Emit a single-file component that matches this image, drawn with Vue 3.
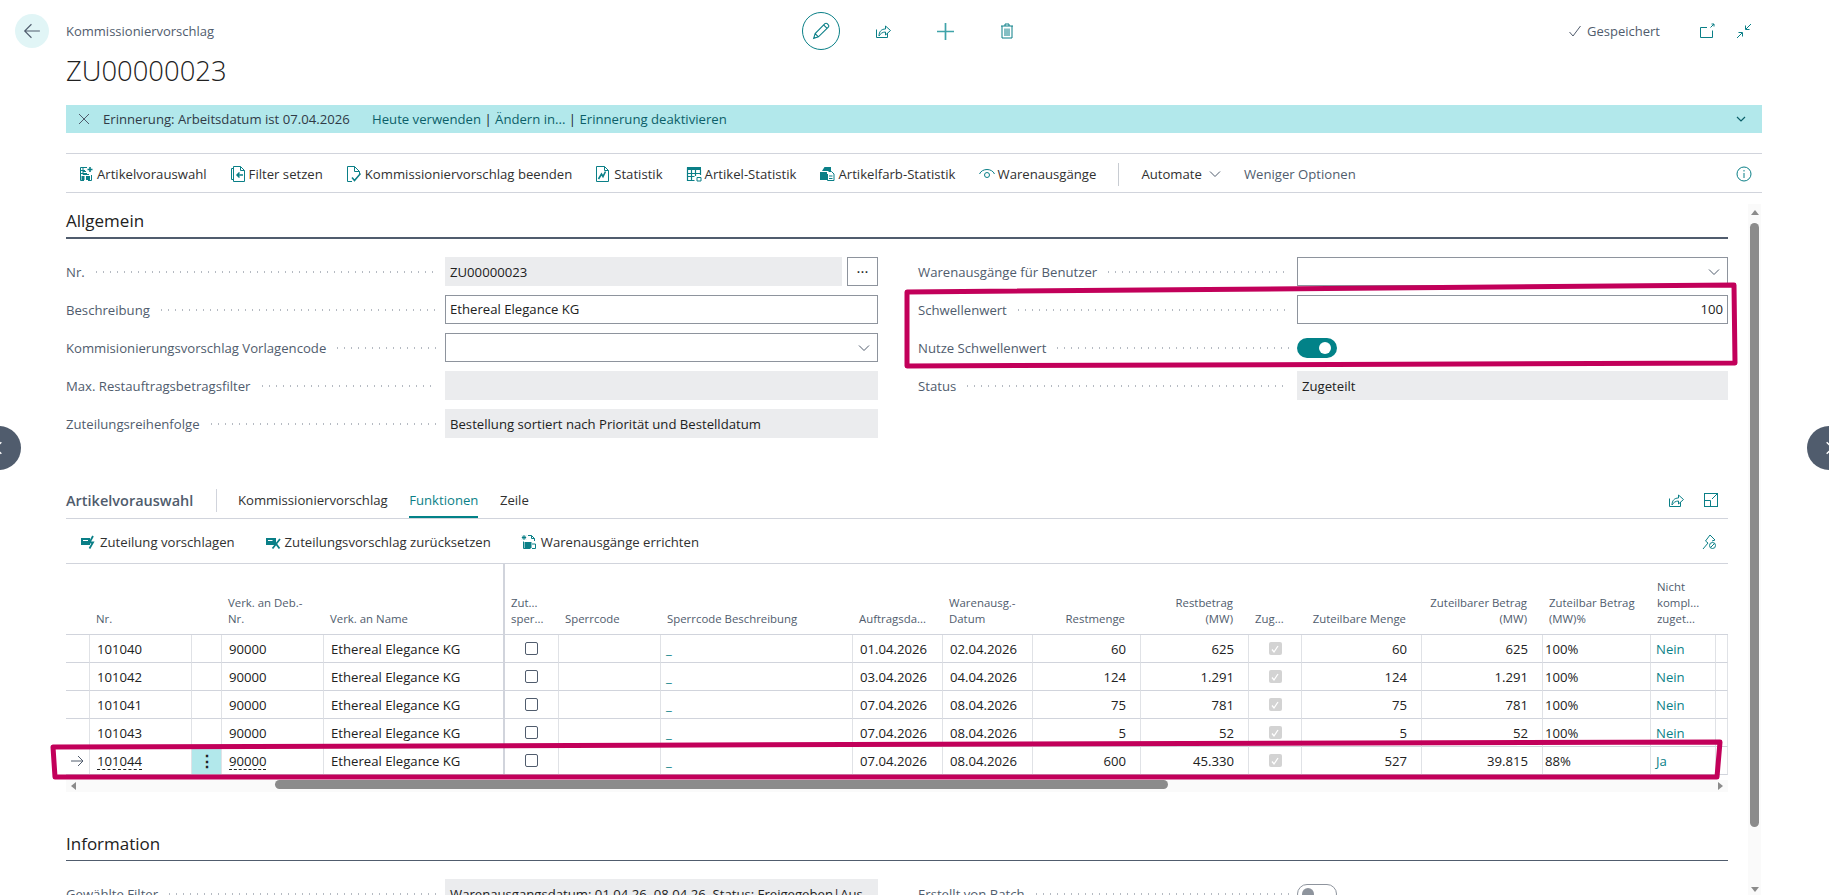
<script setup>
const icons = {
  pick: '<path d="M9 1.5H2.5v13H6M2.5 4.5H7M2.5 7.5H9M5 1.5v7M13.5 9v5.5H10"/><path d="M9.5 3.5h5M12 1v5" stroke-width="1.6"/><rect x="3.5" y="10" width="3" height="4" fill="#0a7f87" stroke="none"/><rect x="8" y="10" width="4" height="4" fill="#0a7f87" stroke="none"/><path d="M5 5.5h3M5 8.5h6"/>',
  filter: '<path d="M3.5 2.5h-2v11h2"/><path d="M3.5 15.5V.5h7l4 4v11z" /><path d="M10.5.5v4h4"/><path d="M13 9H7M9.5 6.5 7 9l2.5 2.5" stroke-width="1.5"/>',
  finish: '<path d="M6 15.5H1.5V.5h7l5 5v2.5M8.5.5v5h5"/><path d="M6 11.5l2.5 3 6-7" stroke-width="1.5"/>',
  stat: '<path d="M1.5.5h8l4 4v11h-12zM9.5.5v4h4"/><path d="M3.5 13 6.5 8l1.5 2.5 2.5-5" stroke-width="1.6"/>',
  itemstat: '<rect x="1" y="1" width="14" height="3" fill="#0a7f87" stroke="none"/><path d="M1.5 1.5v13h7M5.5 4v10.5M9.5 4v6M14.5 4v5M1.5 7.5h13M1.5 10.5h7" stroke-width="1.2"/><path d="M11 11.5h4V15h-4z"/>',
  colorstat: '<path d="M3 5 5.5 1h6.5v4z" fill="#0a7f87" stroke="none"/><rect x="1" y="6" width="7" height="8" fill="#0a7f87" stroke="none"/><path d="M9.5 5.5h3l2.5 2.5v6.5H8.5V8"/><path d="M10 10h3.5M10 12.5h3.5"/>',
  eye: '<path d="M.5 8C3 2 13 2 15.5 8"/><circle cx="8" cy="9" r="2.5"/>',
  propose: '<rect x="1" y="4" width="9" height="7" fill="#0a7f87" stroke="none"/><path d="M3 6.5h5" stroke="#fff"/><path d="M13 2 9.5 8.5H13L9.5 14.5" stroke-width="1.8"/>',
  reset: '<rect x="1" y="4" width="10" height="7" fill="#0a7f87" stroke="none"/><path d="M3 6.5h6" stroke="#fff"/><path d="M7.5 5l7 9.5M15 5l-7.5 9.5" stroke-width="1.8"/>',
  ship: '<path d="M3 1v5M.8 3.5h4.4M1.3 1.8l3.4 3.4M4.7 1.8 1.3 5.2"/><path d="M7 1.5h3.5l3 3V7M10.5 1.5v3h3"/><path d="M2.5 7.5V14.5h7"/><rect x="3.5" y="8" width="7" height="6" fill="#0a7f87" stroke="none"/><path d="M11 10h3.5v4.5H11"/>',
  share: '<path d="M1.5 6.5v8h11V10"/><path d="M4 13c0-4.5 2.5-7 6.5-7V3l5 4.5-5 4.5V9C7.5 9 5.5 10.5 4 13z"/>',
  tableOpen: '<rect x="1.5" y="1.5" width="13" height="13"/><path d="M1.5 8.5h6v6M9 7l5.5-5.5M10.5 1.5h4v4"/>',
  pin: '<path d="M9 1 4.5 7 7 9l-5 6M9 1l5 5-3 1"/><circle cx="11.5" cy="11.5" r="3"/><path d="M9.5 13.5l4-4"/>',
  pop: '<path d="M13.5 7.5v7h-12v-10H8"/><path d="M11.5 4.5 15 1M12.5 1H15v2.5"/>',
  shrink: '<path d="M1 15l5-5M2.5 9.5H6.5V13.5"/><path d="M15 1l-5 5M9.5 2.5V6.5H13.5"/>'
}

const actions = [
  { icon: 'pick', text: 'Artikelvorauswahl' },
  { icon: 'filter', text: 'Filter setzen' },
  { icon: 'finish', text: 'Kommissioniervorschlag beenden' },
  { icon: 'stat', text: 'Statistik' },
  { icon: 'itemstat', text: 'Artikel-Statistik' },
  { icon: 'colorstat', text: 'Artikelfarb-Statistik' },
  { icon: 'eye', text: 'Warenausgänge' }
]

const subActions = [
  { icon: 'propose', text: 'Zuteilung vorschlagen' },
  { icon: 'reset', text: 'Zuteilungsvorschlag zurücksetzen' },
  { icon: 'ship', text: 'Warenausgänge errichten' }
]

const leftFields = [
  { label: 'Nr.', value: 'ZU00000023', kind: 'ro', more: true },
  { label: 'Beschreibung', value: 'Ethereal Elegance KG', kind: 'edit' },
  { label: 'Kommisionierungsvorschlag Vorlagencode', value: '', kind: 'select' },
  { label: 'Max. Restauftragsbetragsfilter', value: '', kind: 'ro' },
  { label: 'Zuteilungsreihenfolge', value: 'Bestellung sortiert nach Priorität und Bestelldatum', kind: 'ro' }
]

const rightFields = [
  { label: 'Warenausgänge für Benutzer', value: '', kind: 'select' },
  { label: 'Schwellenwert', value: '100', kind: 'num' },
  { label: 'Nutze Schwellenwert', kind: 'toggle' },
  { label: 'Status', value: 'Zugeteilt', kind: 'ro' }
]

const columns = [
  { w: 24, h: '' },
  { w: 102, h: 'Nr.' },
  { w: 30, h: '' },
  { w: 102, h: 'Verk. an Deb.-\nNr.' },
  { w: 181, h: 'Verk. an Name' },
  { w: 54, h: 'Zut...\nsper...' },
  { w: 102, h: 'Sperrcode' },
  { w: 192, h: 'Sperrcode Beschreibung' },
  { w: 90, h: 'Auftragsda...' },
  { w: 90, h: 'Warenausg.-\nDatum' },
  { w: 108, h: 'Restmenge', right: true },
  { w: 108, h: 'Restbetrag\n(MW)', right: true },
  { w: 53, h: 'Zug...' },
  { w: 120, h: 'Zuteilbare Menge', right: true },
  { w: 121, h: 'Zuteilbarer Betrag\n(MW)', right: true },
  { w: 108, h: 'Zuteilbar Betrag\n(MW)%' },
  { w: 65, h: 'Nicht\nkompl...\nzuget...' },
  { w: 12, h: '' }
]

const rows = [
  { nr: '101040', d1: '01.04.2026', d2: '02.04.2026', qty: '60', amt: '625', aq: '60', aa: '625', pct: '100%', full: 'Nein' },
  { nr: '101042', d1: '03.04.2026', d2: '04.04.2026', qty: '124', amt: '1.291', aq: '124', aa: '1.291', pct: '100%', full: 'Nein' },
  { nr: '101041', d1: '07.04.2026', d2: '08.04.2026', qty: '75', amt: '781', aq: '75', aa: '781', pct: '100%', full: 'Nein' },
  { nr: '101043', d1: '07.04.2026', d2: '08.04.2026', qty: '5', amt: '52', aq: '5', aa: '52', pct: '100%', full: 'Nein' },
  { nr: '101044', d1: '07.04.2026', d2: '08.04.2026', qty: '600', amt: '45.330', aq: '527', aa: '39.815', pct: '88%', full: 'Ja', current: true }
]
</script>

<template>
  <div class="page">
    <header class="head">
      <div class="head-row">
        <button class="back">
          <svg class="line-ic" viewBox="0 0 16 16" width="18" height="18"><path d="M15 8H1.5M7.5 2 1.5 8l6 6" /></svg>
        </button>
        <span class="crumb">Kommissioniervorschlag</span>
        <div class="head-tools">
          <span class="tool edit">
            <svg class="ic" viewBox="0 0 16 16" width="18" height="18"><path d="M1.5 14.5 2.8 10.3 11.5 1.5a1.4 1.4 0 0 1 2 0l1 1a1.4 1.4 0 0 1 0 2L5.7 13.2zM2.8 10.3l2.9 2.9M10.5 2.8l2.7 2.7" /></svg>
          </span>
          <span class="tool"><svg class="ic" viewBox="0 0 16 16" width="16" height="16" v-html="icons.share"></svg></span>
          <span class="tool">
            <svg class="ic plus" viewBox="0 0 16 16" width="16" height="16"><path d="M8 0v16M0 8h16" /></svg>
          </span>
          <span class="tool">
            <svg class="ic" viewBox="0 0 16 16" width="16" height="16"><path d="M2 3h12M6 3V1h4v2M3 3v12h10V3M6 5.5V13M8 5.5V13M10 5.5V13" /></svg>
          </span>
        </div>
        <div class="head-status">
          <svg class="line-ic" viewBox="0 0 12 12" width="12" height="12"><path d="M.5 7 4 11 11.5 1" /></svg>
          <span class="saved">Gespeichert</span>
          <svg class="ic pop" viewBox="0 0 16 16" width="16" height="16" v-html="icons.pop"></svg>
          <svg class="ic" viewBox="0 0 16 16" width="16" height="16" v-html="icons.shrink"></svg>
        </div>
      </div>
      <h1 class="title">ZU00000023</h1>
    </header>

    <div class="notice">
      <svg class="line-ic x" viewBox="0 0 12 12" width="12" height="12"><path d="M1 1l10 10M11 1 1 11" /></svg>
      <span class="notice-text">Erinnerung: Arbeitsdatum ist 07.04.2026</span>
      <span class="notice-links">Heute verwenden <i>|</i> Ändern in... <i>|</i> Erinnerung deaktivieren</span>
      <svg class="notice-chev" viewBox="0 0 12 12" width="12" height="12"><path d="M2 4l4 4 4-4" /></svg>
    </div>

    <nav class="actions">
      <span v-for="a in actions" :key="a.text" class="act">
        <svg class="ic" viewBox="0 0 16 16" width="16" height="16" v-html="icons[a.icon]"></svg>
        {{ a.text }}
      </span>
      <span class="act-sep"></span>
      <span class="act">Automate
        <svg class="line-ic chev" viewBox="0 0 12 12" width="12" height="12"><path d="M1 3.5l5 5 5-5" /></svg>
      </span>
      <span class="act muted">Weniger Optionen</span>
      <svg class="ic info" viewBox="0 0 16 16" width="16" height="16"><circle cx="8" cy="8" r="7" /><path d="M8 7v5M8 4v1.5" /></svg>
    </nav>

    <div class="scroller">
      <main class="content">
        <h2 class="section first">Allgemein</h2>
        <div class="form">
          <div class="form-col left">
            <div v-for="f in leftFields" :key="f.label" class="field">
              <label class="lbl"><span>{{ f.label }}</span><i class="dots"></i></label>
              <div class="ctl-wrap">
                <div class="ctl" :class="f.kind">{{ f.value }}
                  <svg v-if="f.kind === 'select'" class="line-ic sel" viewBox="0 0 12 12" width="12" height="12"><path d="M1 3.5l5 5 5-5" /></svg>
                </div>
                <button v-if="f.more" class="more">···</button>
              </div>
            </div>
          </div>
          <div class="form-col right">
            <div v-for="f in rightFields" :key="f.label" class="field">
              <label class="lbl"><span>{{ f.label }}</span><i class="dots"></i></label>
              <div class="ctl-wrap">
                <div v-if="f.kind === 'toggle'" class="toggle on"><b></b></div>
                <div v-else class="ctl" :class="f.kind">{{ f.value }}
                  <svg v-if="f.kind === 'select'" class="line-ic sel" viewBox="0 0 12 12" width="12" height="12"><path d="M1 3.5l5 5 5-5" /></svg>
                </div>
              </div>
            </div>
          </div>
        </div>

        <section class="sub">
          <div class="tabs">
            <span class="sub-title">Artikelvorauswahl</span>
            <span class="tab">Kommissioniervorschlag</span>
            <span class="tab active">Funktionen</span>
            <span class="tab">Zeile</span>
            <span class="tabs-tools">
              <svg class="ic" viewBox="0 0 16 16" width="16" height="16" v-html="icons.share"></svg>
              <svg class="ic" viewBox="0 0 16 16" width="16" height="16" v-html="icons.tableOpen"></svg>
            </span>
          </div>
          <div class="sub-actions">
            <span v-for="a in subActions" :key="a.text" class="act">
              <svg class="ic" viewBox="0 0 16 16" width="16" height="16" v-html="icons[a.icon]"></svg>
              {{ a.text }}
            </span>
            <svg class="ic pin" viewBox="0 0 16 16" width="16" height="16" v-html="icons.pin"></svg>
          </div>
          <table class="grid">
            <colgroup>
              <col v-for="(c, i) in columns" :key="i" :style="{ width: c.w + 'px' }" />
            </colgroup>
            <thead>
              <tr>
                <th v-for="(c, i) in columns" :key="i" :class="{ right: c.right }">{{ c.h }}</th>
              </tr>
            </thead>
            <tbody>
              <tr v-for="r in rows" :key="r.nr">
                <td class="mark">
                  <svg v-if="r.current" class="line-ic" viewBox="0 0 14 14" width="14" height="14"><path d="M1 7h12M8 2l5 5-5 5" /></svg>
                </td>
                <td><span :class="{ dashed: r.current }">{{ r.nr }}</span></td>
                <td class="menu" :class="{ on: r.current }">{{ r.current ? '⋮' : '' }}</td>
                <td><span :class="{ dashed: r.current }">90000</span></td>
                <td>Ethereal Elegance KG</td>
                <td class="center"><span class="check"></span></td>
                <td></td>
                <td class="link">_</td>
                <td>{{ r.d1 }}</td>
                <td>{{ r.d2 }}</td>
                <td class="right">{{ r.qty }}</td>
                <td class="right">{{ r.amt }}</td>
                <td class="center">
                  <span class="check done">
                    <svg viewBox="0 0 12 12" width="12" height="12"><path d="M3 6.5 5 9l4-6" /></svg>
                  </span>
                </td>
                <td class="right">{{ r.aq }}</td>
                <td class="right">{{ r.aa }}</td>
                <td class="tight">{{ r.pct }}</td>
                <td class="link">{{ r.full }}</td>
                <td></td>
              </tr>
            </tbody>
          </table>
          <div class="hbar">
            <i class="arrow-l"></i>
            <span class="hthumb"></span>
            <i class="arrow-r"></i>
          </div>
        </section>

        <h2 class="section second">Information</h2>
        <div class="form">
          <div class="form-col left">
            <div class="field">
              <label class="lbl"><span>Gewählte Filter</span><i class="dots"></i></label>
              <div class="ctl-wrap"><div class="ctl ro">Warenausgangsdatum: 01.04.26..08.04.26, Status: Freigegeben|Aus</div></div>
            </div>
          </div>
          <div class="form-col right">
            <div class="field">
              <label class="lbl"><span>Erstellt von Batch</span><i class="dots"></i></label>
              <div class="ctl-wrap"><div class="toggle off"><b></b></div></div>
            </div>
          </div>
        </div>
      </main>
      <aside class="vbar">
        <i class="arrow-u"></i>
        <span class="vthumb"></span>
        <i class="arrow-d"></i>
      </aside>
    </div>

    <span class="side prev">
      <svg viewBox="0 0 12 12" width="14" height="14"><path d="M8 1 3 6l5 5" /></svg>
    </span>
    <span class="side next">
      <svg viewBox="0 0 12 12" width="14" height="14"><path d="M4 1l5 5-5 5" /></svg>
    </span>

    <svg class="marks" viewBox="0 0 1829 895" width="1829" height="895">
      <path d="M907 292 1734 285 1735 363 907 366Z" />
      <path d="M53 747 1720 742 1717 777 55 777Z" />
    </svg>
  </div>
</template>

<style scoped>
.page {
  position: relative;
  width: 1829px;
  height: 895px;
  overflow: hidden;
  background: #fff;
  color: #212121;
  font-family: "Open Sans", "Noto Sans", sans-serif;
  font-size: 13.15px;
}
.ic {
  flex: none;
  fill: none;
  stroke: #0a7f87;
  stroke-width: 1;
}
.line-ic {
  flex: none;
  fill: none;
  stroke: #505c6d;
  stroke-width: 1;
}
.head {
  height: 105px;
  padding-top: 12px;
  box-sizing: border-box;
}
.head-row {
  display: flex;
  align-items: center;
  height: 38px;
}
.back {
  width: 34px;
  height: 34px;
  margin-left: 15px;
  padding: 0;
  border: 0;
  border-radius: 50%;
  background: #e1f5f6;
  display: flex;
  align-items: center;
  justify-content: center;
}
.crumb {
  margin-left: 17px;
  width: 736px;
  color: #505c6d;
  font-size: 13px;
}
.head-tools {
  display: flex;
  gap: 24px;
}
.tool {
  width: 38px;
  height: 38px;
  display: flex;
  align-items: center;
  justify-content: center;
  box-sizing: border-box;
}
.tool.edit {
  border: 1px solid #0a7f87;
  border-radius: 50%;
}
.plus {
  stroke: #3fa3a9;
  stroke-width: 1.6;
  width: 17px;
  height: 17px;
}
.head-status {
  margin-left: auto;
  margin-right: 77px;
  display: flex;
  align-items: center;
}
.saved {
  margin-left: 6px;
  margin-right: 39px;
  font-size: 13px;
  color: #505c6d;
}
.pop {
  margin-right: 21px;
}
.title {
  margin: 3px 0 0 66px;
  font-size: 27.4px;
  font-weight: 300;
  line-height: 36px;
  color: #212121;
}
.notice {
  display: flex;
  align-items: center;
  height: 28px;
  margin: 0 67px 0 66px;
  padding: 0 12px;
  background: #b2e8eb;
}
.x {
  margin-right: 13px;
}
.notice-text {
  width: 269px;
  color: #303a46;
}
.notice-links {
  color: #0b5f69;
}
.notice-links i {
  font-style: normal;
  color: #212121;
}
.notice-chev {
  margin-left: auto;
  margin-right: 3px;
  fill: none;
  stroke: #0b5f69;
  stroke-width: 1.2;
}
.actions {
  display: flex;
  align-items: center;
  gap: 23px;
  margin: 20px 67px 0 66px;
  padding: 2px 12px 0;
  box-sizing: border-box;
  height: 40px;
  border-top: 1px solid #d1d4dc;
  border-bottom: 1px solid #d1d4dc;
}
.act {
  display: inline-flex;
  align-items: center;
  gap: 3px;
  white-space: nowrap;
  color: #303030;
}
.act.muted {
  color: #505c6d;
}
.act-sep {
  width: 1px;
  height: 23px;
  background: #c8ccd2;
  margin: 0 -1px;
}
.chev {
  margin-left: 4px;
}
.info {
  margin-left: auto;
  margin-right: -2px;
}
.scroller {
  display: flex;
  height: 702px;
  overflow: hidden;
}
.content {
  width: 1662px;
  margin-left: 66px;
  flex: none;
}
.section {
  margin: 0;
  font-size: 17px;
  font-weight: 500;
  line-height: 26px;
  color: #212121;
  border-bottom: 2px solid #505c6d;
}
.section.first {
  margin-top: 15px;
  padding-bottom: 3px;
}
.section.second {
  margin-top: 39px;
  padding-bottom: 3px;
  border-bottom-width: 1px;
}
.form {
  display: grid;
  grid-template-columns: 812px 810px;
  column-gap: 40px;
  margin-top: 18px;
}
.form-col {
  display: flex;
  flex-direction: column;
  gap: 9px;
}
.field {
  display: flex;
  align-items: center;
  height: 29px;
}
.lbl {
  flex: none;
  display: flex;
  align-items: center;
  gap: 8px;
  width: 379px;
  padding-right: 8px;
  box-sizing: border-box;
  color: #505c6d;
  white-space: nowrap;
}
.dots {
  flex: 1;
  height: 4px;
  background: radial-gradient(circle, #b5bac2 0.8px, transparent 1.1px) 0 0 / 7px 4px repeat-x;
}
.ctl-wrap {
  flex: 1;
  display: flex;
  gap: 5px;
  height: 100%;
  align-items: center;
}
.ctl {
  position: relative;
  flex: 1;
  height: 29px;
  box-sizing: border-box;
  padding: 0 5px;
  line-height: 30px;
  white-space: nowrap;
  overflow: hidden;
}
.ctl.ro {
  background: #ebecee;
}
.ctl.edit,
.ctl.select,
.ctl.num {
  border: 1px solid #8e949d;
  line-height: 27px;
  padding: 0 4px;
}
.ctl.num {
  text-align: right;
}
.sel {
  position: absolute;
  right: 7px;
  top: 8px;
}
.more {
  flex: none;
  width: 31px;
  height: 29px;
  padding: 0 0 2px;
  border: 1px solid #8e949d;
  background: #fff;
  font-family: inherit;
  font-size: 15px;
  font-weight: 400;
  color: #212121;
}
.toggle {
  position: relative;
  width: 40px;
  height: 20px;
  box-sizing: border-box;
  border-radius: 10px;
}
.toggle b {
  position: absolute;
  top: 4px;
  width: 12px;
  height: 12px;
  border-radius: 50%;
}
.toggle.on {
  background: #028288;
}
.toggle.on b {
  right: 6px;
  background: #fff;
}
.toggle.off {
  border: 1px solid #8e949d;
}
.toggle.off b {
  left: 4px;
  top: 3px;
  background: #8e949d;
}
.sub {
  margin-top: 50px;
}
.tabs {
  display: flex;
  align-items: center;
  height: 30px;
  border-bottom: 1px solid #d1d4dc;
  box-sizing: content-box;
}
.sub-title {
  font-size: 14.5px;
  font-weight: 600;
  color: #505c6d;
  width: 150px;
  height: 23px;
  line-height: 23px;
  border-right: 1px solid #d1d4dc;
  margin-right: 21px;
  margin-top: -6px;
}
.tab {
  height: 30px;
  line-height: 24px;
  margin-right: 21.5px;
  box-sizing: border-box;
  color: #303030;
}
.tab.active {
  color: #0a7f87;
  border-bottom: 2px solid #028288;
}
.tabs-tools {
  margin-left: auto;
  margin-right: 9px;
  margin-top: -6px;
  display: flex;
  gap: 19px;
}
.sub-actions {
  display: flex;
  align-items: center;
  gap: 30px;
  height: 44px;
  padding: 1px 14px 0;
  box-sizing: content-box;
  height: 43px;
  border-bottom: 1px solid #d1d4dc;
}
.sub-actions .act {
  gap: 4px;
}
.pin {
  margin-left: auto;
  margin-right: -3px;
}
.grid {
  table-layout: fixed;
  width: 1662px;
  border-collapse: separate;
  border-spacing: 0;
}
.grid th {
  height: 71px;
  box-sizing: border-box;
  padding: 0 6px 7px;
  vertical-align: bottom;
  text-align: left;
  font-size: 11.4px;
  font-weight: 400;
  line-height: 16px;
  color: #505c6d;
  white-space: pre-line;
  border-bottom: 1px solid #d1d4dc;
  overflow: hidden;
}
.grid th.right {
  text-align: right;
  padding-right: 16px;
}
.grid th:nth-child(5),
.grid td:nth-child(5) {
  border-right: 2px solid #d1d4dc;
}
.grid td {
  height: 28px;
  box-sizing: border-box;
  padding: 0 7px;
  white-space: nowrap;
  overflow: hidden;
  border-bottom: 1px solid #d1d4dc;
  border-right: 1px solid #e0e2e6;
}
.grid td.right {
  text-align: right;
  padding-right: 14px;
}
.grid td.center {
  text-align: center;
  padding: 0;
}
.grid td.tight {
  padding-left: 2px;
}
.grid td.link {
  padding-left: 5px;
  color: #0a7f87;
}
.grid td.mark {
  padding: 0 0 0 4px;
}
.mark svg {
  display: block;
}
.grid td.menu {
  padding: 0;
  text-align: center;
  font-size: 16px;
  font-weight: 700;
}
.menu.on {
  background: #b2e8eb;
}
.dashed {
  text-decoration: underline dashed 1px #212121;
  text-underline-offset: 3px;
}
.check {
  display: inline-block;
  width: 13px;
  height: 13px;
  margin-top: -2px;
  box-sizing: border-box;
  border: 1px solid #505c6d;
  border-radius: 2px;
  vertical-align: middle;
}
.check.done {
  border: 0;
  background: #d3d3d3;
}
.check.done svg {
  display: block;
  fill: none;
  stroke: #fff;
  stroke-width: 1.3;
  margin: 0.5px;
}
.hbar {
  display: flex;
  align-items: center;
  height: 12px;
  margin-top: 5px;
  background: #fafafa;
  padding: 0 5px;
}
.arrow-l,
.arrow-r {
  width: 0;
  height: 0;
  border-top: 4px solid transparent;
  border-bottom: 4px solid transparent;
}
.arrow-l {
  border-right: 5px solid #8b8b8b;
}
.arrow-r {
  border-left: 5px solid #8b8b8b;
  margin-left: auto;
}
.hthumb {
  width: 893px;
  height: 9px;
  margin-left: 199px;
  border-radius: 5px;
  background: #8b8b8b;
  margin-top: -3px;
}
.vbar {
  flex: none;
  display: flex;
  flex-direction: column;
  align-items: center;
  width: 13px;
  margin-left: 20px;
  margin-top: 11px;
  background: #fafafa;
}
.vthumb {
  width: 9px;
  height: 604px;
  margin-top: 8px;
  border-radius: 5px;
  background: #8b8b8b;
}
.arrow-u,
.arrow-d {
  width: 0;
  height: 0;
  border-left: 4px solid transparent;
  border-right: 4px solid transparent;
}
.arrow-u {
  margin-top: 6px;
  border-bottom: 5px solid #8b8b8b;
}
.arrow-d {
  margin-top: auto;
  margin-bottom: 3px;
  border-top: 5px solid #8b8b8b;
}
.side {
  position: absolute;
  top: 426px;
  width: 44px;
  height: 44px;
  border-radius: 50%;
  background: #505c6d;
  display: flex;
  align-items: center;
  justify-content: center;
}
.side svg {
  fill: none;
  stroke: #fff;
  stroke-width: 1.2;
}
.side.prev {
  left: -23px;
}
.side.next {
  left: 1807px;
}
.marks {
  position: absolute;
  left: 0;
  top: 0;
  pointer-events: none;
}
.marks path {
  fill: none;
  stroke: #c2005a;
  stroke-width: 5;
  stroke-linejoin: round;
}
</style>
